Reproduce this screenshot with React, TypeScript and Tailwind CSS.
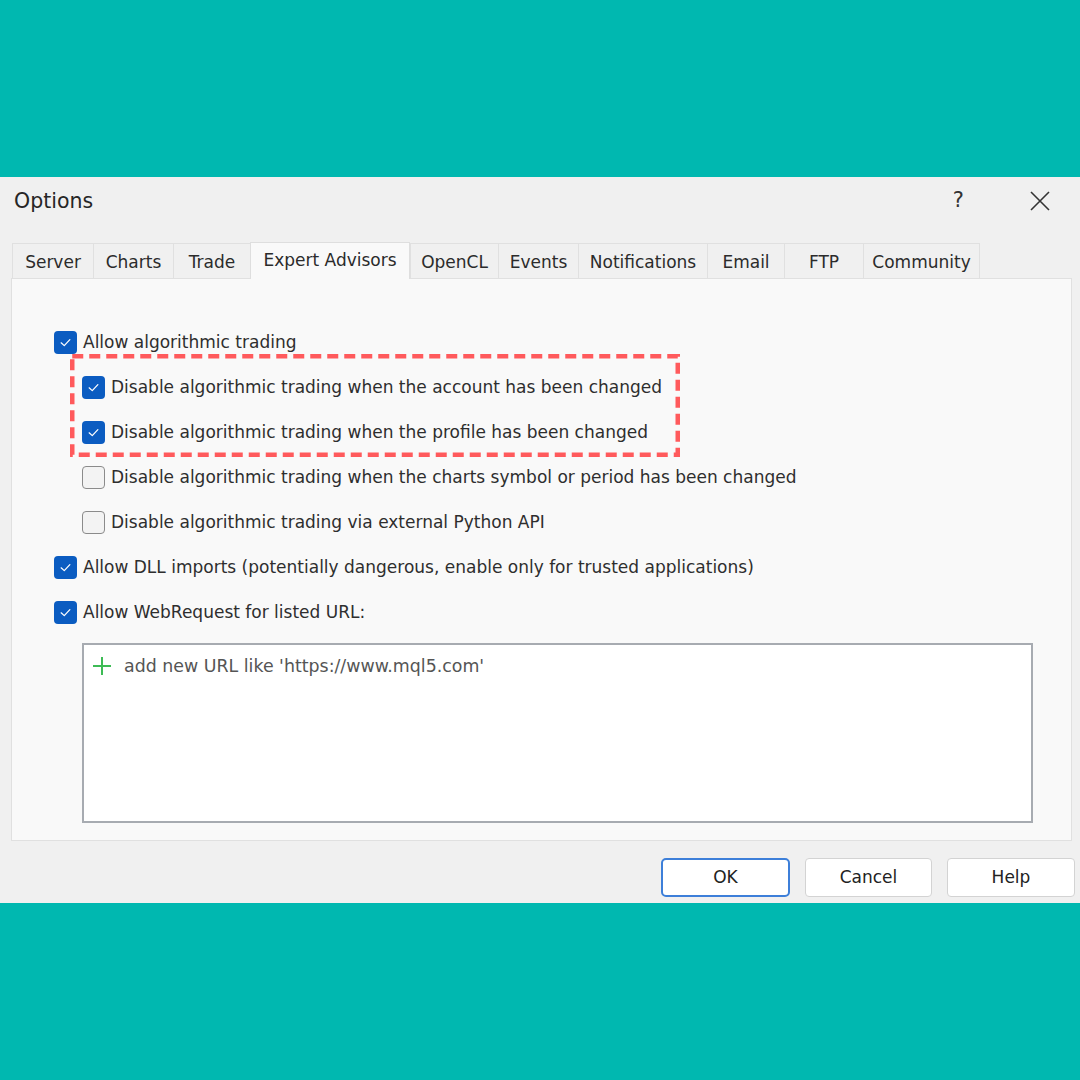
import { useState } from 'react';

interface Tab {
  label: string;
  width: string;
}

const tabs: Tab[] = [
  { label: 'Server', width: 'w-[81px]' },
  { label: 'Charts', width: 'w-[80px]' },
  { label: 'Trade', width: 'w-[77px]' },
  { label: 'Expert Advisors', width: 'w-[160px]' },
  { label: 'OpenCL', width: 'w-[88px]' },
  { label: 'Events', width: 'w-[80px]' },
  { label: 'Notifications', width: 'w-[129px]' },
  { label: 'Email', width: 'w-[77px]' },
  { label: 'FTP', width: 'w-[79px]' },
  { label: 'Community', width: 'w-[117px]' },
];

function CheckBox({ checked }: { checked: boolean }) {
  if (checked) {
    return (
      <div className="w-[23px] h-[23px] rounded-[4px] bg-[#0b5cc1] flex items-center justify-center shrink-0">
        <svg width="15" height="15" viewBox="0 0 24 24" fill="none">
          <path d="M5 12.5 L10 17 L19 7.5" stroke="white" strokeWidth="2" strokeLinecap="round" strokeLinejoin="round" />
        </svg>
      </div>
    );
  }
  return <div className="w-[23px] h-[23px] rounded-[4px] bg-[#f3f3f3] border border-[#8b8b8b] shrink-0" />;
}

function Row({ label, checked }: { label: string; checked: boolean }) {
  return (
    <div className="h-[45px] flex items-center gap-[6px]">
      <CheckBox checked={checked} />
      <span className="text-[17px] text-[#2e2e2e] whitespace-nowrap">{label}</span>
    </div>
  );
}

export default function App() {
  const [active] = useState('Expert Advisors');

  return (
    <div className="w-[1080px] h-[1080px] bg-[#00b8b0] flex flex-col" style={{ fontFamily: '"DejaVu Sans", sans-serif' }}>
      <div className="h-[177px]" />
      <div className="h-[726px] bg-[#f0f0f0] flex flex-col">
        {/* title bar */}
        <div className="h-[48px] flex items-center justify-between pl-[14px] pr-[30px]">
          <span className="text-[20.5px] text-[#262626]">Options</span>
          <div className="flex items-center gap-[66px]">
            <span className="text-[21px] text-[#333]">?</span>
            <svg width="20" height="20" viewBox="0 0 20 20" fill="none">
              <path d="M1 1 L19 19 M19 1 L1 19" stroke="#333" strokeWidth="1.6" />
            </svg>
          </div>
        </div>

        {/* tabs */}
        <div className="mt-[16px] pl-[12px] h-[37px] flex items-end">
          {tabs.map((t) =>
            t.label === active ? (
              <div
                key={t.label}
                className={`${t.width} h-[37px] bg-[#f9f9f9] border border-b-0 border-[#dedede] flex items-start justify-center pt-[5px] text-[17px] text-[#2b2b2b] relative z-10 -mb-px`}
              >
                {t.label}
              </div>
            ) : (
              <div
                key={t.label}
                className={`${t.width} h-[35px] bg-[#f0f0f0] border border-b-0 border-r-0 last:border-r border-[#e0e0e0] flex items-center justify-center pt-[3px] text-[17px] text-[#2b2b2b]`}
              >
                {t.label}
              </div>
            )
          )}
        </div>

        {/* panel */}
        <div className="ml-[11px] mr-[8px] h-[563px] bg-[#f9f9f9] border border-[#e0e0e0] pl-[42px] pt-[41px]">
          <Row label="Allow algorithmic trading" checked />
          <div className="pl-[28px]">
            <div className="relative">
              <svg className="absolute left-[-12px] top-[-11px]" width="610" height="103" viewBox="0 0 610 103" fill="none">
                <rect x="2.25" y="2.25" width="605.5" height="98.5" stroke="#ff5a5c" strokeWidth="4.5" strokeDasharray="11 6" />
              </svg>
              <Row label="Disable algorithmic trading when the account has been changed" checked />
              <Row label="Disable algorithmic trading when the profile has been changed" checked />
            </div>
            <Row label="Disable algorithmic trading when the charts symbol or period has been changed" checked={false} />
            <Row label="Disable algorithmic trading via external Python API" checked={false} />
          </div>
          <Row label="Allow DLL imports (potentially dangerous, enable only for trusted applications)" checked />
          <Row label="Allow WebRequest for listed URL:" checked />
          <div className="ml-[28px] mt-[8px] w-[951px] h-[180px] bg-white border-2 border-[#a7abb1]">
            <div className="flex items-center gap-[12px] pl-[8px] pt-[8px]">
              <svg width="20" height="20" viewBox="0 0 20 20" fill="none">
                <path d="M10 1 V19 M1 10 H19" stroke="#3dbb55" strokeWidth="2" />
              </svg>
              <span className="text-[17.4px] text-[#555]">add new URL like 'https://www.mql5.com'</span>
            </div>
          </div>
        </div>

        {/* buttons */}
        <div className="flex justify-end gap-[15px] pr-[5px] mt-[17px]">
          <button className="w-[129px] h-[39px] bg-white border-2 border-[#3d7fd9] rounded-[5px] text-[17px] text-[#222]">OK</button>
          <button className="w-[127px] h-[39px] bg-white border border-[#d3d3d3] rounded-[4px] text-[17px] text-[#222]">Cancel</button>
          <button className="w-[128px] h-[39px] bg-white border border-[#d3d3d3] rounded-[4px] text-[17px] text-[#222]">Help</button>
        </div>
      </div>
      <div className="flex-1" />
    </div>
  );
}
